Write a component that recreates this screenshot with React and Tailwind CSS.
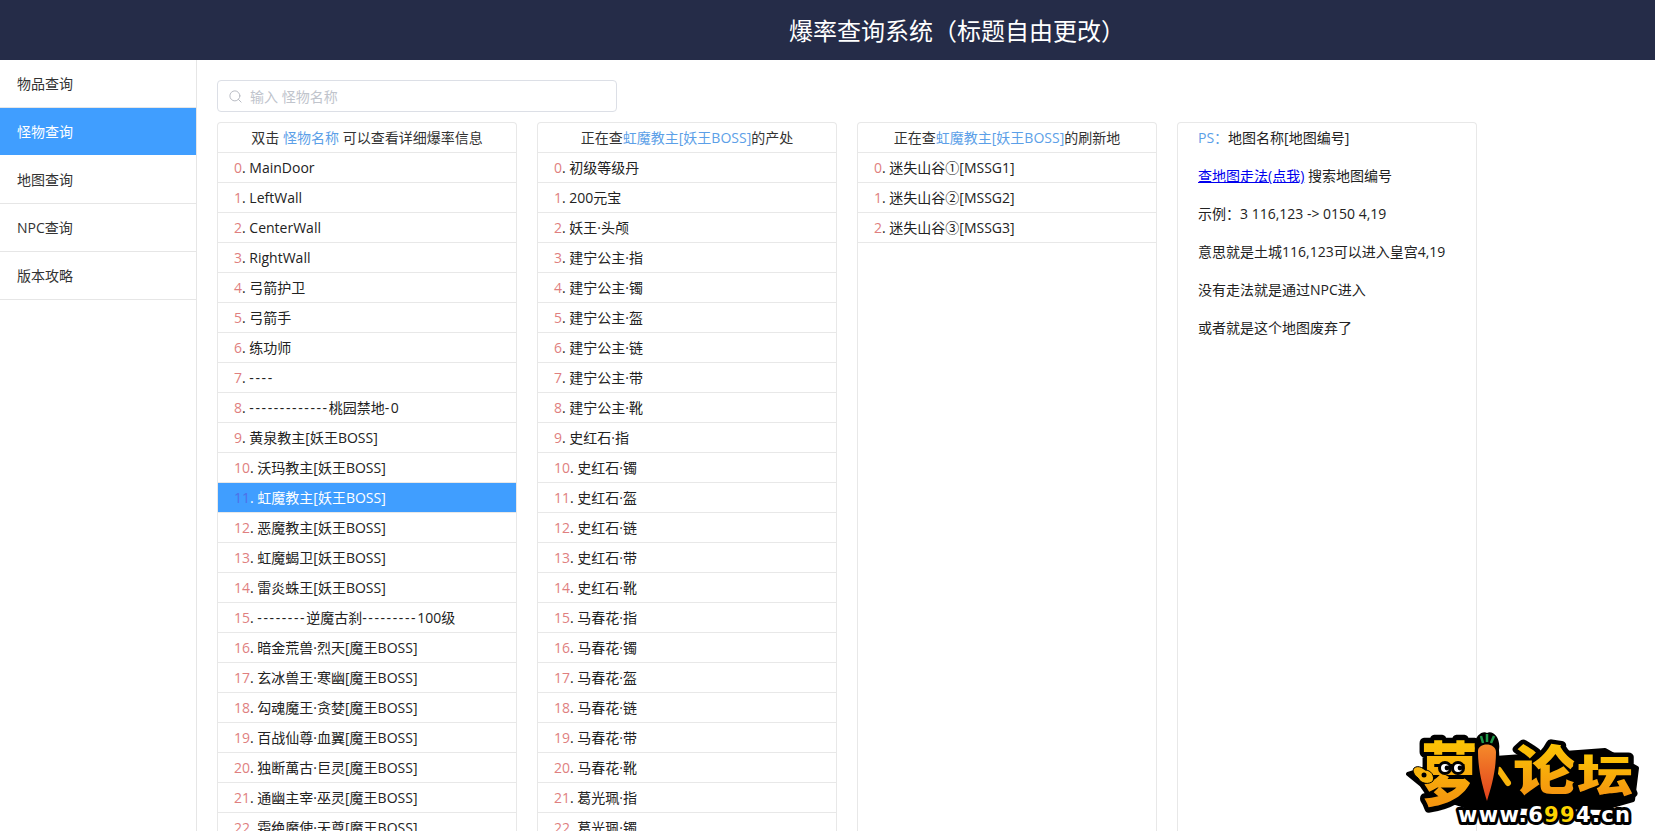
import React from "react";
import { Search } from "lucide-react";

const menu = ["物品查询", "怪物查询", "地图查询", "NPC查询", "版本攻略"];
const col1 = ["MainDoor","LeftWall","CenterWall","RightWall","弓箭护卫","弓箭手","练功师","----","-------------桃园禁地-0","黄泉教主[妖王BOSS]","沃玛教主[妖王BOSS]","虹魔教主[妖王BOSS]","恶魔教主[妖王BOSS]","虹魔蝎卫[妖王BOSS]","雷炎蛛王[妖王BOSS]","--------逆魔古刹---------100级","暗金荒兽·烈天[魔王BOSS]","玄冰兽王·寒幽[魔王BOSS]","勾魂魔王·贪婪[魔王BOSS]","百战仙尊·血翼[魔王BOSS]","独断萬古·巨灵[魔王BOSS]","通幽主宰·巫灵[魔王BOSS]","霜绝魔使·天尊[魔王BOSS]"];
const parts = ["指","镯","盔","链","带","靴"];
const col2 = ["初级等级丹","200元宝","妖王·头颅",
  ...parts.map(p=>"建宁公主·"+p),...parts.map(p=>"史红石·"+p),...parts.map(p=>"马春花·"+p),"葛光珮·指","葛光珮·镯"];
const col3 = ["迷失山谷①[MSSG1]","迷失山谷②[MSSG2]","迷失山谷③[MSSG3]"];

function Label({ text }) {
  return text.split(/(-+)/).map((s, i) =>
    s.startsWith("-") ? <span key={i} className="tracking-[1.6px]">{s}</span> : <span key={i}>{s}</span>
  );
}

function Row({ i, text, active }) {
  return (
    <div className={"h-[30px] shrink-0 border-b border-[#e8e8e8] pl-[16px] leading-[29px] whitespace-nowrap " + (active ? "bg-[#409eff] text-white" : "")}>
      <span className={active ? "text-[#4f6fe8]" : "text-[#e07f7f]"}>{i}</span>. <Label text={text} />
    </div>
  );
}

function Card({ children }) {
  return <div className="w-[300px] h-full shrink-0 overflow-hidden rounded-t border border-b-0 border-[#e8e8e8] flex flex-col">{children}</div>;
}

function Head({ children }) {
  return <div className="h-[30px] shrink-0 border-b border-[#e8e8e8] text-center leading-[29px] text-[#333]">{children}</div>;
}

function Logo() {
  return (
    <div className="absolute right-[14px] bottom-[3px] w-[236px] h-[100px]">
      <svg viewBox="0 0 236 100" width="236" height="100">
        <defs>
          <linearGradient id="lg" x1="0" y1="0" x2="0" y2="1">
            <stop offset="0" stopColor="#ffd400" />
            <stop offset="1" stopColor="#f28a12" />
          </linearGradient>
          <linearGradient id="cg" x1="0" y1="0" x2="0" y2="1">
            <stop offset="0" stopColor="#f58a2a" />
            <stop offset="1" stopColor="#e2401c" />
          </linearGradient>
        </defs>
        <path d="M3 46 L22 40 L90 30 L200 22 L232 40 L228 72 L200 80 L60 78 L30 68 Z" fill="#000" stroke="#000" strokeWidth="4" strokeLinejoin="round" />
        <g fontFamily="'Noto Sans CJK SC', sans-serif" fontWeight="900" fill="url(#lg)" stroke="#000" strokeWidth="9" paintOrder="stroke" strokeLinejoin="round">
          <text transform="translate(16 72) scale(0.98 1.2)" fontSize="58">萝</text>
          <text transform="translate(108 62) scale(1.14 0.96)" fontSize="56">论</text>
          <text transform="translate(172 64) scale(1.22 0.96)" fontSize="46">坛</text>
        </g>
        <path d="M94 42 L103 55" stroke="#000" strokeWidth="14" strokeLinecap="round" />
        <path d="M94 42 L103 55" stroke="#f9b40c" strokeWidth="6" strokeLinecap="round" />
        <path d="M70 20 C68 8 78 2 82 5 C88 2 96 10 94 22 C96 44 88 72 82 80 C76 70 68 42 70 20Z" fill="#000" />
        <path d="M73 24 C72 14 91 14 91 24 C91 44 86 60 82 73 C78 60 73 42 73 24Z" fill="url(#cg)" />
        <path d="M78 15 L76 8 M82 14 L82 6 M86 15 L89 8" stroke="#1f9a4a" strokeWidth="2.5" fill="none" />
        <path d="M9 40 C14 36 20 42 20 42 C26 42 30 48 28 53 C24 57 16 56 13 50 C9 47 7 43 9 40Z" fill="#f9b40c" stroke="#000" strokeWidth="1" />
        <circle cx="19" cy="47" r="2.5" fill="#000" />
        <circle cx="40" cy="40" r="5.5" fill="#fff" stroke="#000" strokeWidth="3" />
        <circle cx="53" cy="40" r="5.5" fill="#fff" stroke="#000" strokeWidth="3" />
        <circle cx="42" cy="40" r="2.4" fill="#000" />
        <circle cx="55" cy="40" r="2.4" fill="#000" />
        <text x="53" y="94" fontFamily="'DejaVu Sans', sans-serif" fontWeight="700" fontSize="21" textLength="172" fill="#fff" stroke="#000" strokeWidth="6" paintOrder="stroke" strokeLinejoin="round">
          www.6<tspan fill="#ffd400">99</tspan>4.cn
        </text>
      </svg>
    </div>
  );
}

export default function App() {
  return (
    <div className="relative h-screen overflow-hidden flex flex-col bg-white text-[14px] text-[#222]" style={{ fontFamily: "'Open Sans','Noto Sans CJK SC',sans-serif" }}>
      <header className="h-[60px] shrink-0 bg-[#252c48] text-white text-[24px] leading-[60px] text-center pl-[259px]" style={{ fontFamily: "'Noto Sans CJK SC',sans-serif" }}>
        {"爆率查询系统\uFF08标题自由更改\uFF09"}
      </header>
      <div className="flex flex-1 min-h-0">
        <nav className="w-[197px] shrink-0 border-r border-[#e6e6e6]">
          {menu.map((m, i) => (
            <div key={m} className={"h-[48px] pl-[17px] leading-[47px] border-b " + (i === 1 ? "bg-[#409eff] text-white border-white" : "border-[#e6e6e6] text-[#333]")}>{m}</div>
          ))}
        </nav>
        <main className="flex-1 min-w-0 flex flex-col pt-[20px] pl-[20px]">
          <div className="relative w-[400px] h-[32px] shrink-0">
            <Search className="absolute left-[11px] top-[9px] text-[#b4b8c0]" size={15} strokeWidth={1.5} />
            <input readOnly placeholder="输入 怪物名称" className="w-full h-full rounded border border-[#dcdfe6] pl-[32px] pr-3 outline-none placeholder:text-[#c0c4cc]" />
          </div>
          <div className="flex gap-[20px] mt-[10px] flex-1 min-h-0">
            <Card>
              <Head>双击 <span className="text-[#5c9fe8]">怪物名称</span> 可以查看详细爆率信息</Head>
              {col1.map((t, i) => <Row key={i} i={i} text={t} active={i === 11} />)}
            </Card>
            <Card>
              <Head>正在查<span className="text-[#5c9fe8]">虹魔教主[妖王BOSS]</span>的产处</Head>
              {col2.map((t, i) => <Row key={i} i={i} text={t} />)}
            </Card>
            <Card>
              <Head>正在查<span className="text-[#5c9fe8]">虹魔教主[妖王BOSS]</span>的刷新地</Head>
              {col3.map((t, i) => <Row key={i} i={i} text={t} />)}
            </Card>
            <Card>
              <div className="pl-[20px] pt-[3px] flex flex-col gap-[14px] leading-[24px] whitespace-nowrap">
                <p><span className="text-[#5c9fe8]">{"PS\uFF1A"}</span>地图名称[地图编号]</p>
                <p><a className="text-[#0000ee] underline" href="#">查地图走法(点我)</a> 搜索地图编号</p>
                <p>{"示例\uFF1A3 116,123 -> 0150 4,19"}</p>
                <p>意思就是土城116,123可以进入皇宫4,19</p>
                <p>没有走法就是通过NPC进入</p>
                <p>或者就是这个地图废弃了</p>
              </div>
            </Card>
          </div>
        </main>
      </div>
      <Logo />
    </div>
  );
}
